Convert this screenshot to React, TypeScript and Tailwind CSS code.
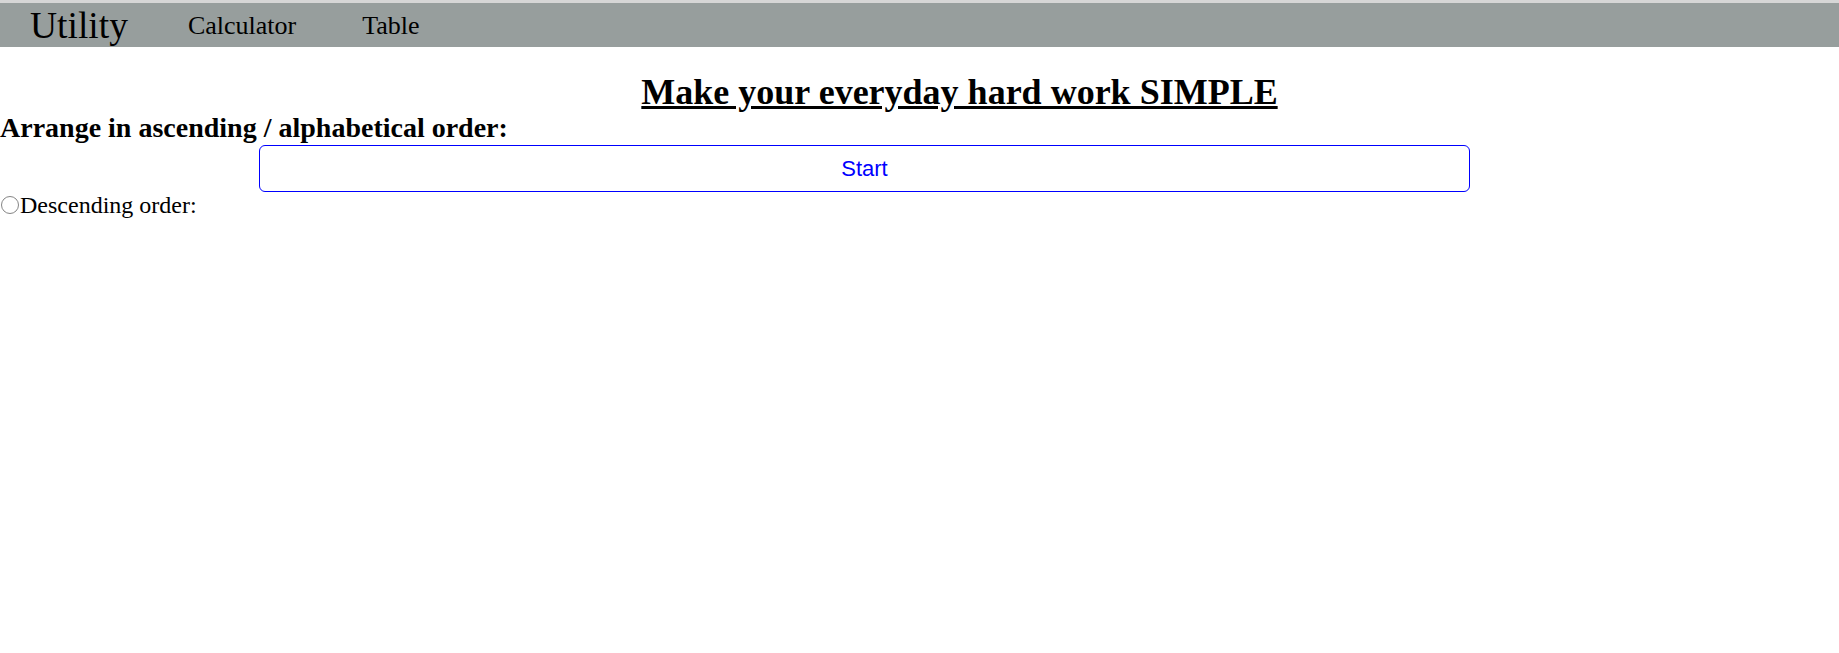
import React from "react";

const serif = "font-['Liberation_Serif','Times_New_Roman',serif]";

const NavBar = () => {
	return (
		<div>
			<div className="h-[3px] bg-[#d6d6d6]" />
			<nav className={`h-[44px] bg-[#979e9d] flex items-start text-black ${serif}`}>
				<a className="ml-[30px] mt-[2px] text-[37.5px] leading-[41px]">Utility</a>
				<a className="ml-[60px] mt-[1px] text-[26px] leading-[44px]">Calculator</a>
				<a className="ml-[66px] mt-[1px] text-[26px] leading-[44px]">Table</a>
			</nav>
		</div>
	);
};

export default function App() {
	return (
		<div className={`min-h-[653px] bg-white text-black ${serif}`}>
			<NavBar />
			<h1 className="mt-[25px] pl-[80px] text-center text-[36px] leading-[40px] font-bold underline">
				Make your everyday hard work SIMPLE
			</h1>
			<h3 className="text-[28px] leading-[32px] font-bold">
				Arrange in ascending / alphabetical order:
			</h3>
			<button className="mt-[1px] ml-[259px] w-[1211px] h-[47px] rounded-[6px] border border-[#0000ff] bg-white text-[#0000ff] text-[22px] font-['Liberation_Sans',Arial,sans-serif]">
				Start
			</button>
			<label className="flex items-center text-[24px] leading-[26px]">
				<input
					type="radio"
					className="appearance-none ml-[1px] mr-[1px] w-[18px] h-[18px] rounded-full border-[1.5px] border-[#858585] bg-white"
				/>
				<span>Descending order:</span>
			</label>
		</div>
	);
}
